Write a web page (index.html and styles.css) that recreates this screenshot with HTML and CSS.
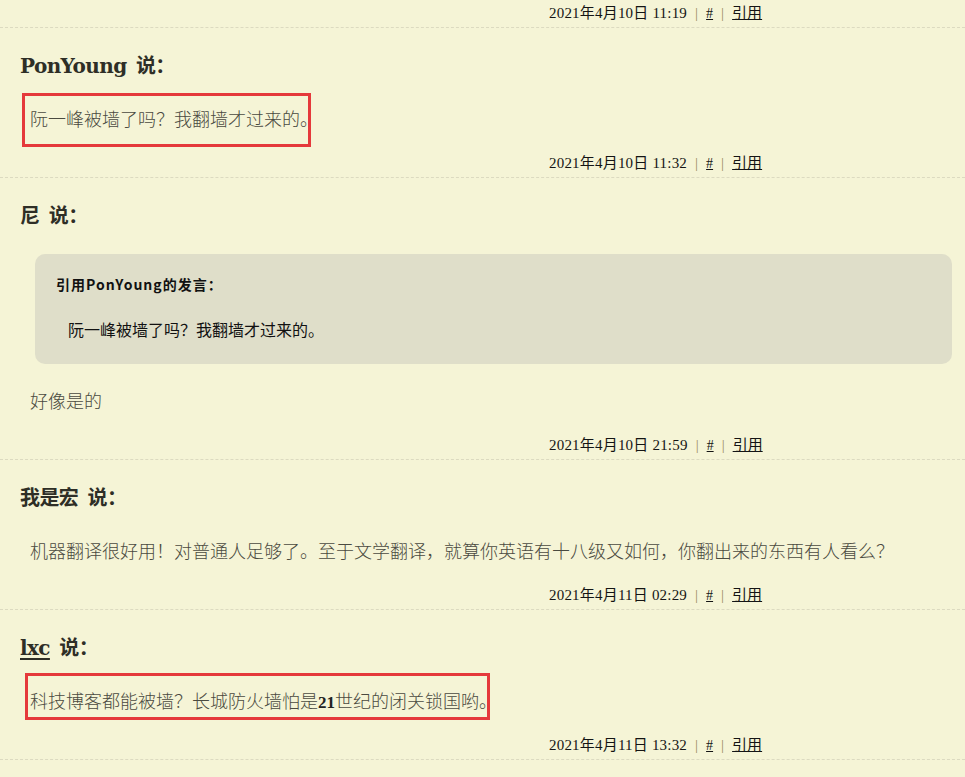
FILE: index.html
```html
<!DOCTYPE html>
<html lang="zh-CN">
<head>
<meta charset="utf-8">
<title>评论</title>
<link rel="stylesheet" href="styles.css">
</head>
<body>
<ol class="comments">
  <li class="comment comment-tail">
    <div class="meta"><span class="date">2021年4月10日 11:19</span><span class="sep">|</span><a class="hash" href="#">#</a><span class="sep">|</span><a href="#">引用</a></div>
  </li>
  <li class="comment">
    <h3 class="author"><span class="name">PonYoung</span> 说：</h3>
    <p class="body">阮一峰被墙了吗？我翻墙才过来的。<span class="annot annot-a"></span></p>
    <div class="meta"><span class="date">2021年4月10日 11:32</span><span class="sep">|</span><a class="hash" href="#">#</a><span class="sep">|</span><a href="#">引用</a></div>
  </li>
  <li class="comment">
    <h3 class="author"><span class="name">尼</span> 说：</h3>
    <blockquote class="quote">
      <div class="quote-head">引用PonYoung的发言：</div>
      <p class="quote-text">阮一峰被墙了吗？我翻墙才过来的。</p>
    </blockquote>
    <p class="body body-after">好像是的</p>
    <div class="meta"><span class="date">2021年4月10日 21:59</span><span class="sep">|</span><a class="hash" href="#">#</a><span class="sep">|</span><a href="#">引用</a></div>
  </li>
  <li class="comment">
    <h3 class="author"><span class="name">我是宏</span> 说：</h3>
    <p class="body">机器翻译很好用！对普通人足够了。至于文学翻译，就算你英语有十八级又如何，你翻出来的东西有人看么？</p>
    <div class="meta"><span class="date">2021年4月11日 02:29</span><span class="sep">|</span><a class="hash" href="#">#</a><span class="sep">|</span><a href="#">引用</a></div>
  </li>
  <li class="comment">
    <h3 class="author"><a class="name" href="#">lxc</a> 说：</h3>
    <p class="body">科技博客都能被墙？长城防火墙怕是<span class="num">21</span>世纪的闭关锁国哟。<span class="annot annot-b"></span></p>
    <div class="meta"><span class="date">2021年4月11日 13:32</span><span class="sep">|</span><a class="hash" href="#">#</a><span class="sep">|</span><a href="#">引用</a></div>
  </li>
</ol>
</body>
</html>
```
FILE: styles.css
```css
html, body {
  margin: 0;
  padding: 0;
  background: #f5f4d6;
}
body {
  font-family: "Liberation Serif", "Noto Sans CJK SC", serif;
  color: #4d4d45;
  overflow: hidden;
  height: 777px;
}
.comments {
  list-style: none;
  margin: 0;
  padding: 0;
}
.comment {
  border-bottom: 1px dashed #dcdac0;
  padding: 20px 13px 4px 20px;
}
.comment-tail {
  padding-top: 3px;
}
.author {
  margin: 0;
  font-size: 20px;
  line-height: 36px;
  font-weight: bold;
  color: #2e2e26;
  font-family: "DejaVu Serif", "Noto Sans CJK SC", serif;
  letter-spacing: -0.6px;
}
.author .name {
  color: #2e2e26;
  margin-right: 3px;
}
.author a.name {
  text-decoration: underline;
  text-underline-offset: 3px;
}
.body {
  position: relative;
  margin: 20px 0 0 0;
  padding-left: 10px;
  font-family: "Noto Sans CJK SC", sans-serif;
  font-size: 18px;
  line-height: 28px;
  height: 28px;
  font-weight: 300;
  color: #4a4a40;
}
.body .num {
  font-family: "Liberation Serif", serif;
  font-weight: bold;
  font-size: 17px;
  line-height: 1;
  color: #222;
}
.body-after {
  margin-top: 22px;
}
.annot {
  position: absolute;
  box-sizing: border-box;
  border: 3px solid #e5393b;
}
.annot-a {
  left: 2px;
  top: -11px;
  width: 289px;
  height: 54px;
}
.annot-b {
  left: 5px;
  top: -13px;
  width: 465px;
  height: 47px;
}
.quote {
  margin: 20px 0 0 15px;
  padding: 20px 20px 25px 21px;
  background: #dfdec9;
  border-radius: 10px;
}
.quote-head {
  font-family: "Noto Sans CJK SC", sans-serif;
  font-size: 14px;
  line-height: 20px;
  font-weight: bold;
  color: #111;
  letter-spacing: 1px;
}
.quote-text {
  margin: 25px 0 0 0;
  padding-left: 12px;
  font-family: "Noto Sans CJK SC", sans-serif;
  font-size: 16px;
  line-height: 20px;
  color: #111;
}
.meta {
  margin-top: 21px;
  padding-left: 529px;
  font-size: 15px;
  line-height: 20px;
  height: 20px;
  color: #141414;
  font-family: "Liberation Serif", "Noto Sans CJK SC", serif;
}
.comment-tail .meta {
  margin-top: 0;
}
.meta .date {
  letter-spacing: 0.2px;
}
.meta .sep {
  color: #9a8a62;
  margin: 0 8px;
}
.meta a {
  color: #141414;
  text-decoration: underline;
}
.meta a.hash {
  font-size: 14px;
}
```
